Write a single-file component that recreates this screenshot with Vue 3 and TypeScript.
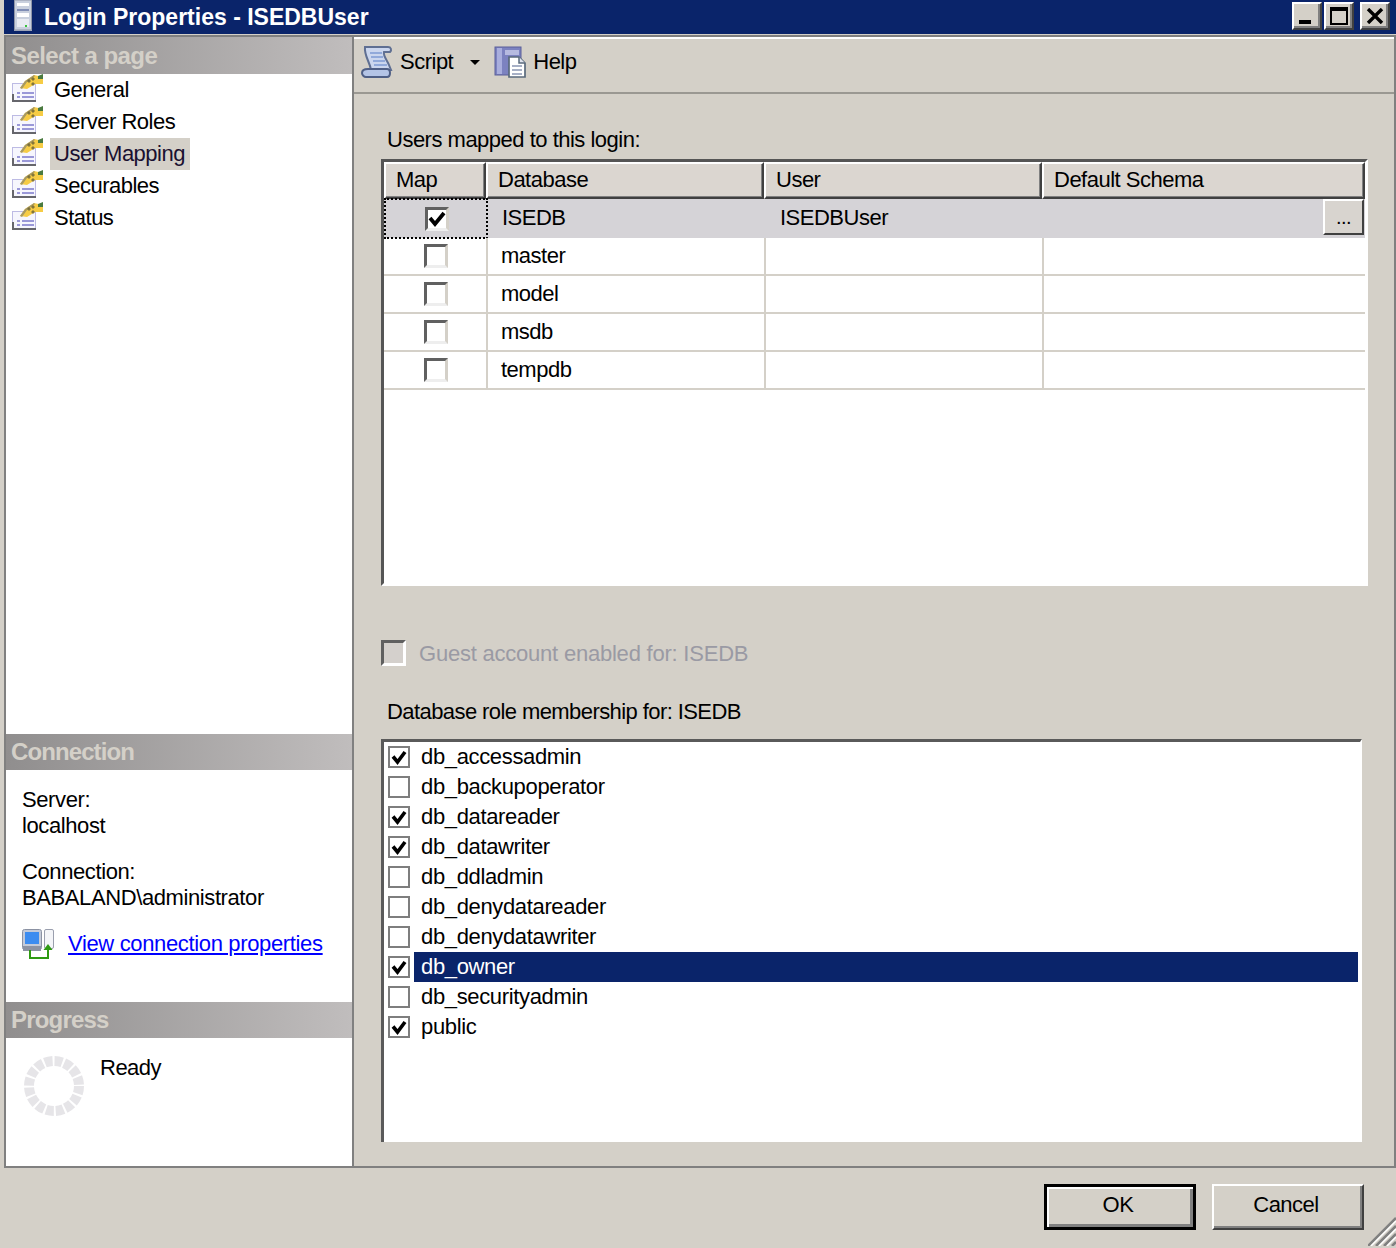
<script setup lang="ts">
const pages = ['General', 'Server Roles', 'User Mapping', 'Securables', 'Status']
const dbs = [
  { name: 'ISEDB', user: 'ISEDBUser', on: true },
  { name: 'master', user: '', on: false },
  { name: 'model', user: '', on: false },
  { name: 'msdb', user: '', on: false },
  { name: 'tempdb', user: '', on: false },
]
const roles = [
  { name: 'db_accessadmin', on: true },
  { name: 'db_backupoperator', on: false },
  { name: 'db_datareader', on: true },
  { name: 'db_datawriter', on: true },
  { name: 'db_ddladmin', on: false },
  { name: 'db_denydatareader', on: false },
  { name: 'db_denydatawriter', on: false },
  { name: 'db_owner', on: true },
  { name: 'db_securityadmin', on: false },
  { name: 'public', on: true },
]
</script>

<template>
  <div class="window">
    <header class="titlebar">
      <svg class="title-icon" width="18" height="32" viewBox="0 0 18 32">
        <rect x="0" y="0" width="18" height="31" fill="#aab2c6" />
        <rect x="0.5" y="0" width="17" height="30" fill="#c9d0de" stroke="#8f96a8" />
        <rect x="3" y="3" width="12" height="3" fill="#fff" />
        <rect x="3" y="9" width="12" height="2" fill="#7f8db5" />
        <rect x="3" y="13" width="12" height="4" fill="#fff" />
        <rect x="3" y="19" width="12" height="8" fill="#e8ebf2" />
        <rect x="11" y="25" width="2" height="2" fill="#37c43c" />
      </svg>
      <span class="title-text">Login Properties - ISEDBUser</span>
      <div class="win-buttons">
        <button class="win-btn" aria-label="Minimize"><span class="glyph-min"></span></button>
        <button class="win-btn" aria-label="Maximize"><span class="glyph-max"></span></button>
        <button class="win-btn close" aria-label="Close">
          <svg width="18" height="16" viewBox="0 0 18 16"><path d="M2 1l14 14M16 1L2 15" stroke="#000" stroke-width="3.4" /></svg>
        </button>
      </div>
    </header>

    <main class="body">
      <aside class="left">
        <h2 class="pane-head">Select a page</h2>
        <ul class="pages">
          <li v-for="p in pages" :key="p" class="page">
            <svg class="page-icon" width="32" height="28" viewBox="0 0 32 28">
              <rect x="0.5" y="9.5" width="23" height="17" fill="#f6f6fd" stroke="#bdbbe4" />
              <path d="M0 28h24v-2H2v-6H0z" fill="#66666c" />
              <path d="M5 19h3M10 19h12M5 23h3M10 23h12" stroke="#9a98d8" stroke-width="1.800" />
              <path d="M8 14l5-7 9-6 9 2v7h-8l-8 5z" fill="#f6cc45" />
              <path d="M8 14l5-7 9-6 1 1-8 6-5 7z" fill="#a89a62" />
              <path d="M17 5l2 2-2 2-2-2zM21 8l2 2-2 2-2-2zM21 3l2 2-2 2-2-2z" fill="#5d5a34" opacity=".75" />
              <path d="M26 2l5-2v5l-5 0z" fill="#4a7a3f" />
            </svg>
            <span class="page-label" :class="{ active: p === 'User Mapping' }">{{ p }}</span>
          </li>
        </ul>

        <h2 class="pane-head small">Connection</h2>
        <div class="conn">
          <p class="conn-line">Server:</p>
          <p class="conn-line">localhost</p>
          <p class="conn-line gap">Connection:</p>
          <p class="conn-line">BABALAND\administrator</p>
          <div class="conn-link">
            <svg width="32" height="30" viewBox="0 0 32 30">
              <rect x="0.5" y="0.5" width="19" height="20" rx="2" fill="#c4cad8" stroke="#8b92a3" />
              <rect x="3" y="3" width="14" height="12" fill="#3c8cf0" />
              <rect x="1" y="17" width="18" height="5" fill="#8d93a3" />
              <rect x="22.5" y="0.5" width="9" height="19" rx="1.5" fill="#f4f5f8" stroke="#9a9fae" />
              <path d="M8 21v8h18v-8" fill="none" stroke="#2f9a12" stroke-width="2" />
              <path d="M26 15l-4.500 6h9z" fill="#2f9a12" />
            </svg>
            <a class="link" href="#">View connection properties</a>
          </div>
        </div>

        <h2 class="pane-head small prog">Progress</h2>
        <div class="progress">
          <svg width="60" height="60" viewBox="0 0 60 60">
            <circle cx="30" cy="30" r="25" fill="none" stroke="#e6e5e8" stroke-width="10" stroke-dasharray="7.800 2" />
          </svg>
          <span class="ready">Ready</span>
        </div>
      </aside>

      <section class="right">
        <div class="toolbar">
          <svg class="tool-icon" width="32" height="32" viewBox="0 0 32 32">
            <path d="M4 1h23c3 0 4 3 2 5h-6c-1 4 3 8 5 13l2 5H10C9 16 3 10 4 1z" fill="#cbd6ee" stroke="#5f6f92" stroke-width="2" />
            <path d="M9 7h12M10 11h12M12 15h12M13 19h13" stroke="#7f9bd4" stroke-width="1.700" />
            <path d="M1 27c0-3 3-4 6-4h19c4 0 4 8 0 8H5c-2 0-4-2-4-4z" fill="#b4c4e6" stroke="#4f5f86" stroke-width="2" />
          </svg>
          <span class="tool-text">Script</span>
          <span class="caret"></span>
          <svg class="tool-icon" width="32" height="32" viewBox="0 0 32 32">
            <rect x="1" y="1" width="26" height="28" fill="#7c82c0" stroke="#5a5f99" />
            <rect x="3" y="2" width="5" height="26" fill="#a9aedd" />
            <path d="M11 4h14v5H11z" fill="#b6bae0" />
            <path d="M15 11h10l6 6v14H15z" fill="#fff" stroke="#5a6a7c" stroke-width="1.700" />
            <path d="M25 11v6h6" fill="#dfe3ee" stroke="#5a6a7c" stroke-width="1.500" />
            <path d="M18 20h10M18 24h10M18 28h10" stroke="#8a96b4" stroke-width="1.600" />
          </svg>
          <span class="tool-text">Help</span>
        </div>

        <div class="content">
          <p class="label first">Users mapped to this login:</p>
          <div class="grid-box">
            <div class="grid-row head">
              <div class="hcell">Map</div>
              <div class="hcell">Database</div>
              <div class="hcell">User</div>
              <div class="hcell">Default Schema</div>
            </div>
            <div v-for="(d, i) in dbs" :key="d.name" class="grid-row data" :class="{ current: i === 0 }">
              <div class="cell map" :class="{ focus: i === 0 }">
                <span class="check3d">
                  <svg v-if="d.on" width="18" height="16" viewBox="0 0 18 16"><path d="M2 7l5 6L16 2" fill="none" stroke="#000" stroke-width="3.800" /></svg>
                </span>
              </div>
              <div class="cell">{{ d.name }}</div>
              <div class="cell">{{ d.user }}</div>
              <div class="cell schema">
                <span v-if="i === 0" class="dots"><i>...</i></span>
              </div>
            </div>
          </div>

          <div class="guest">
            <span class="check-off"></span>
            <span class="guest-text">Guest account enabled for: ISEDB</span>
          </div>

          <p class="label second">Database role membership for: ISEDB</p>
          <div class="roles">
            <div v-for="r in roles" :key="r.name" class="role">
              <span class="check-flat">
                <svg v-if="r.on" width="16" height="15" viewBox="0 0 16 15"><path d="M2 6.500l4.500 5.500L14 2" fill="none" stroke="#000" stroke-width="3.600" /></svg>
              </span>
              <span class="role-name" :class="{ selected: r.name === 'db_owner' }">{{ r.name }}</span>
            </div>
          </div>
        </div>
      </section>
    </main>

    <footer class="footer">
      <button class="btn primary">OK</button>
      <button class="btn">Cancel</button>
      <svg class="grip" width="28" height="30" viewBox="0 0 28 30">
        <path d="M0 30L28 2M8 30L28 10M16 30L28 18M24 30l4-4" stroke="#808080" stroke-width="2.500" />
        <path d="M3 30L28 5M11 30L28 13M19 30l9-9" stroke="#fff" stroke-width="1.500" />
      </svg>
    </footer>
  </div>
</template>

<style scoped>
.window {
  width: 1396px;
  height: 1248px;
  background: #d4d0c8;
  display: flex;
  flex-direction: column;
  overflow: hidden;
  font-family: "Liberation Sans", Arial, sans-serif;
  font-size: 22px;
  letter-spacing: -0.5px;
  color: #000;
}
p, h2, ul { margin: 0; padding: 0; }

.titlebar {
  height: 34px;
  margin-left: 4px;
  flex: none;
  background: #0a246a;
  display: flex;
  align-items: center;
  padding-left: 10px;
}
.title-icon { flex: none; margin-top: -2px; }
.title-text {
  margin-left: 12px;
  color: #fff;
  font-weight: 700;
  font-size: 23px;
  letter-spacing: 0;
}
.win-buttons { margin-left: auto; display: flex; padding-right: 6px; margin-top: -2px; }
.win-btn {
  width: 30px;
  height: 28px;
  padding: 0;
  margin-left: 2px;
  background: #d4d0c8;
  border: 2px solid;
  border-color: #fff #404040 #404040 #fff;
  box-shadow: inset -2px -2px 0 #808080;
  display: flex;
  align-items: center;
  justify-content: center;
  position: relative;
}
.win-btn.close { margin-left: 6px; }
.glyph-min { width: 12px; height: 4px; background: #000; margin-top: 12px; margin-right: 4px; }
.glyph-max { width: 18px; height: 18px; border: 2px solid #000; border-top-width: 4px; box-sizing: border-box; }

.body {
  height: 1133px;
  flex: none;
  margin-top: 1px;
  margin-left: 4px;
  display: flex;
  border: 2px solid #808080;
  box-sizing: border-box;
}
.left {
  width: 348px;
  flex: none;
  background: #fff;
  border-right: 2px solid #808080;
  box-sizing: border-box;
  display: flex;
  flex-direction: column;
}
.pane-head {
  height: 37px;
  flex: none;
  background: linear-gradient(90deg, #908e8e, #c0bdbd);
  color: #d4d0c8;
  font-size: 24px;
  font-weight: 700;
  line-height: 37px;
  padding-left: 5px;
  letter-spacing: -0.55px;
}
.pane-head.small { height: 36px; line-height: 36px; letter-spacing: -0.9px; }
.pane-head.prog { letter-spacing: -0.8px; }

.pages { list-style: none; flex: 1; padding-top: 0; }
.page { height: 32px; display: flex; align-items: center; padding-left: 6px; }
.page-icon { flex: none; margin-top: -4px; }
.page-label { margin-left: 6px; padding: 0 5px 0 4px; height: 32px; line-height: 32px; margin-right: 0; }
.page-label.active { background: #d4d0c8; color: #1a1030; }

.conn { height: 232px; flex: none; padding: 17px 0 0 16px; box-sizing: border-box; letter-spacing: -0.4px; }
.conn-line { height: 26px; line-height: 26px; }
.conn-line.gap { margin-top: 20px; }
.conn-link { display: flex; align-items: center; margin-top: 18px; }
.conn-link svg { flex: none; }
.link { margin-left: 14px; color: #0000ff; text-decoration: underline; letter-spacing: -0.35px; }

.progress { height: 128px; flex: none; display: flex; align-items: flex-start; padding: 18px 0 0 18px; box-sizing: border-box; }
.ready { margin-left: 16px; line-height: 26px; margin-top: -1px; }

.right { flex: 1; display: flex; flex-direction: column; min-width: 0; }
.toolbar {
  height: 57px;
  flex: none;
  box-sizing: border-box;
  border-top: 2px solid #fff;
  border-bottom: 2px solid #9a9892;
  display: flex;
  align-items: center;
  padding: 0 0 8px 7px;
}
.tool-icon { flex: none; }
.tool-text { margin-left: 7px; }
.caret {
  width: 0; height: 0;
  border-left: 5px solid transparent;
  border-right: 5px solid transparent;
  border-top: 5px solid #000;
  margin: 2px 14px 0 17px;
}
.content { flex: 1; padding-left: 27px; display: flex; flex-direction: column; min-height: 0; }
.label { line-height: 26px; padding-left: 6px; }
.label.first { margin-top: 33px; }
.label.second { margin-top: 33px; letter-spacing: -0.58px; }

.grid-box {
  margin-top: 6px;
  width: 987px;
  height: 427px;
  flex: none;
  box-sizing: border-box;
  background: #fff;
  border: 3px solid;
  border-color: #555 #fff #fff #555;
}
.grid-row {
  display: grid;
  grid-template-columns: 102px 278px 278px 1fr;
  width: 981px;
}
.grid-row.head { height: 37px; }
.hcell {
  box-sizing: border-box;
  background: #dbd6d0;
  border: 2px solid;
  border-color: #fff #404040 #404040 #fff;
  box-shadow: inset -1px -1px 0 #808080;
  line-height: 32px;
  padding-left: 10px;
}
.grid-row.data { height: 38px; grid-template-columns: 104px 278px 278px 1fr; }
.grid-row.data.current { height: 39px; background: #d5d3d7; }
.cell {
  box-sizing: border-box;
  border-right: 2px solid #d4d0c8;
  border-bottom: 2px solid #d4d0c8;
  line-height: 36px;
  padding-left: 13px;
  position: relative;
}
.current .cell { border-color: transparent; line-height: 38px; padding-left: 14px; }
.cell.schema { border-right: 0; display: flex; justify-content: flex-end; padding: 0 1px 0 0; }
.cell.map { display: flex; align-items: center; justify-content: center; padding: 0 0 0 2px; }
.cell.focus { border: 2px dotted #000; margin-top: -1px; padding: 0 0 0 2px; }
.check3d {
  width: 24px;
  height: 24px;
  box-sizing: border-box;
  background: #fff;
  border: 3px solid;
  border-color: #606060 #d4d0c8 #eeeeee #606060;
  display: flex;
  align-items: center;
  justify-content: center;
}
.dots {
  width: 41px;
  height: 36px;
  box-sizing: border-box;
  background: #d8d4cf;
  border: 2px solid;
  border-color: #fff #404040 #404040 #fff;
  text-align: center;
  line-height: 32px;
  font-size: 20px;
}
.dots i { font-style: normal; }

.guest { display: flex; align-items: center; margin-top: 54px; height: 26px; }
.check-off {
  width: 25px;
  height: 26px;
  box-sizing: border-box;
  background: #d4d0cc;
  border: 3px solid;
  border-color: #606060 #fff #fff #606060;
}
.guest-text { margin-left: 13px; color: #9a9aa4; letter-spacing: -0.22px; line-height: 28px; padding-top: 2px; }

.roles {
  margin-top: 14px;
  width: 981px;
  height: 403px;
  flex: none;
  box-sizing: border-box;
  background: #fff;
  border-top: 3px solid #5a5a5a;
  border-left: 3px solid #5a5a5a;
  border-right: 2px solid #fff;
  padding: 0 2px 0 0;
  letter-spacing: -0.35px;
}
.role { height: 30px; display: flex; align-items: center; padding-left: 4px; }
.check-flat {
  width: 22px;
  height: 22px;
  flex: none;
  box-sizing: border-box;
  background: #fff;
  border: 2px solid #7e7e7e;
  display: flex;
  align-items: center;
  justify-content: center;
}
.role-name { margin-left: 4px; flex: 1; height: 30px; line-height: 29px; padding-left: 7px; }
.role-name.selected { background: #0a246a; color: #fff; }

.footer {
  flex: 1;
  position: relative;
  display: flex;
  align-items: flex-start;
  justify-content: flex-end;
  gap: 16px;
  padding: 16px 32px 0 0;
}
.btn {
  width: 152px;
  height: 46px;
  box-sizing: border-box;
  background: #d4d0c8;
  font: inherit;
  letter-spacing: inherit;
  color: #000;
  padding: 0 4px 4px 0;
  border: 2px solid;
  border-color: #fff #404040 #404040 #fff;
  box-shadow: inset -2px -2px 0 #808080;
}
.btn.primary { border: 3px solid #000; box-shadow: inset 2px 2px 0 #fff, inset -3px -3px 0 #808080; }
.grip { position: absolute; right: 0; bottom: 2px; }
</style>
